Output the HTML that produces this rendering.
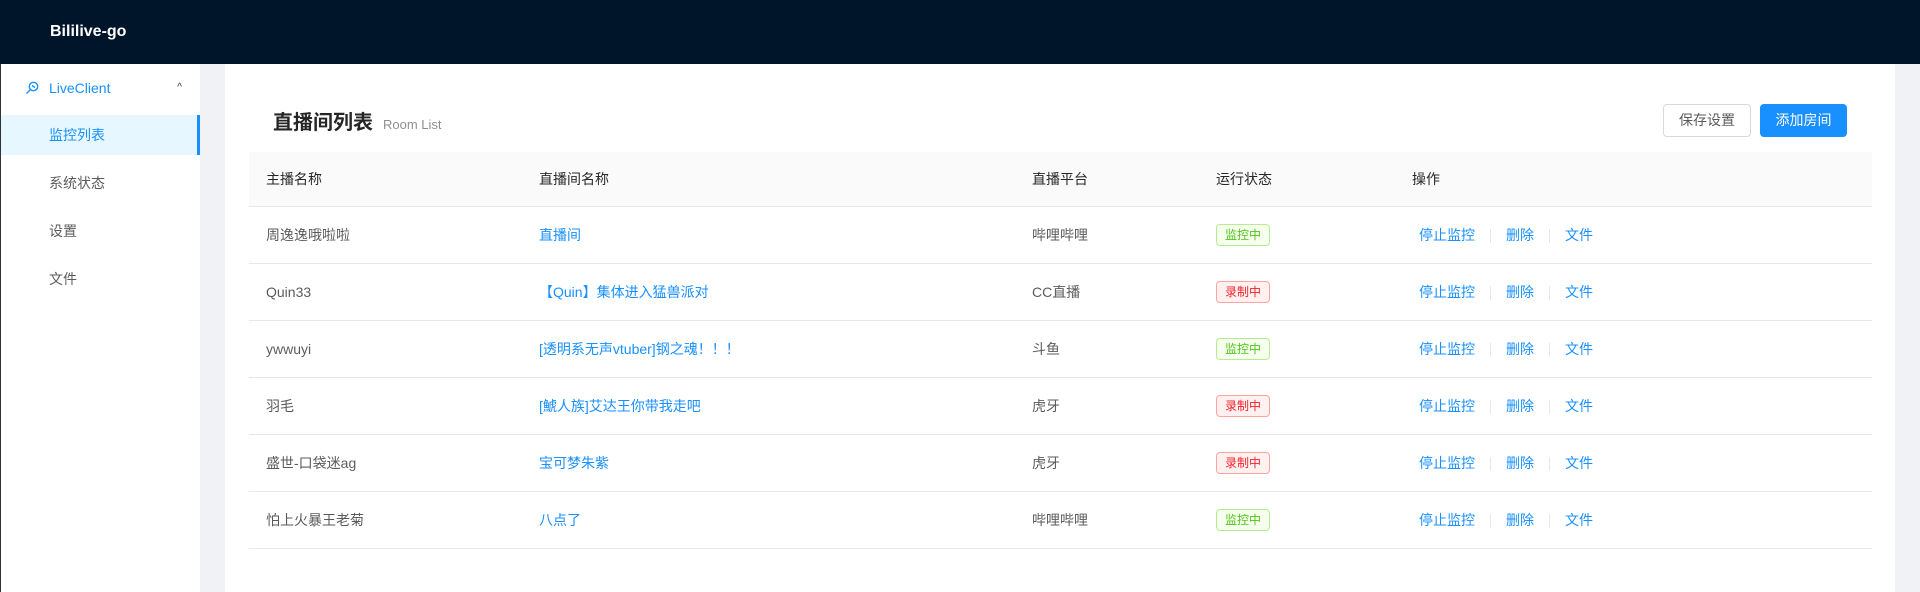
<!DOCTYPE html>
<html><head><meta charset="utf-8"><style>
*{box-sizing:border-box;margin:0;padding:0}
body{width:1920px;height:592px;overflow:hidden;background:#f0f2f5;font-family:"Liberation Sans","Noto Sans CJK SC",sans-serif;font-size:14px;color:rgba(0,0,0,.65);position:relative}
.hdr{position:absolute;left:0;top:0;width:1920px;height:64px;background:#001529;color:#fff;font-weight:bold;font-size:16px;line-height:64px;padding-left:50px}
.side{position:absolute;left:0;top:64px;width:200px;height:528px;background:#fff;border-left:1px solid #333}
.sub{height:40px;margin-top:4px;line-height:40px;padding-left:48px;color:#1890ff;position:relative}
.sub svg{position:absolute;left:24px;top:13px}
.sub .arr{position:absolute;right:18px;top:0;font-size:10px;color:#333}
.it{height:40px;line-height:40px;padding-left:48px;margin-top:8px;color:rgba(0,0,0,.65)}
.it.act{background:#e6f7ff;color:#1890ff;border-right:3px solid #1890ff;margin-top:7px}
.main{position:absolute;left:225px;top:64px;width:1670px;height:528px;background:#fff}
.title{position:absolute;left:48px;top:42px;font-size:20px;font-weight:bold;color:rgba(0,0,0,.85)}
.title span{font-size:13px;font-weight:normal;color:rgba(0,0,0,.45);margin-left:10px}
.btn{position:absolute;top:40px;height:33px;line-height:31px;border-radius:4px;font-size:14px;text-align:center}
.b1{left:1438px;width:88px;border:1px solid #d9d9d9;color:rgba(0,0,0,.65)}
.b2{left:1535px;width:87px;background:#1890ff;color:#fff;border:1px solid #1890ff}
table{position:absolute;left:24px;top:88px;width:1623px;border-collapse:collapse}
th{background:#fafafa;font-weight:normal;color:rgba(0,0,0,.85);height:54px;text-align:left;border-bottom:1px solid #e8e8e8}
td{height:57px;border-bottom:1px solid #e8e8e8}
th,td{padding-left:17px}
a{color:#1890ff;text-decoration:none}
.tag{display:inline-block;font-size:12px;line-height:20px;padding:0 8px;border-radius:4px;border:1px solid #b7eb8f;background:#f6ffed;color:#52c41a}
.tag.r{border-color:#ffa39e;background:#fff1f0;color:#f5222d}
.sep{display:inline-block;width:1px;height:14px;background:#e8e8e8;margin:0 15px;vertical-align:middle}
.op{padding-left:24px}
</style></head><body>
<div class="hdr">Bililive-go</div>
<div class="side">
<div class="sub"><svg width="14" height="14" viewBox="0 0 14 14" fill="none" stroke="#1890ff" stroke-width="1.4"><circle cx="8.5" cy="5.5" r="4.2"/><path d="M5.5 8.5L1.5 12.5M7 4.5l3 2"/></svg>LiveClient<span class="arr">^</span></div>
<div class="it act">监控列表</div>
<div class="it">系统状态</div>
<div class="it">设置</div>
<div class="it">文件</div>
</div>
<div class="main">
<div class="title">直播间列表<span>Room List</span></div>
<div class="btn b1">保存设置</div><div class="btn b2">添加房间</div>
<table>
<colgroup><col style="width:273px"><col style="width:493px"><col style="width:184px"><col style="width:196px"><col></colgroup>
<tr><th>主播名称</th><th>直播间名称</th><th>直播平台</th><th>运行状态</th><th>操作</th></tr>
<tr><td>周逸逸哦啦啦</td><td><a>直播间</a></td><td>哔哩哔哩</td><td><span class="tag">监控中</span></td><td class="op"><a>停止监控</a><span class="sep"></span><a>删除</a><span class="sep"></span><a>文件</a></td></tr>
<tr><td>Quin33</td><td><a>【Quin】集体进入猛兽派对</a></td><td>CC直播</td><td><span class="tag r">录制中</span></td><td class="op"><a>停止监控</a><span class="sep"></span><a>删除</a><span class="sep"></span><a>文件</a></td></tr>
<tr><td>ywwuyi</td><td><a>[透明系无声vtuber]钢之魂！！！</a></td><td>斗鱼</td><td><span class="tag">监控中</span></td><td class="op"><a>停止监控</a><span class="sep"></span><a>删除</a><span class="sep"></span><a>文件</a></td></tr>
<tr><td>羽毛</td><td><a>[鯱人族]艾达王你带我走吧</a></td><td>虎牙</td><td><span class="tag r">录制中</span></td><td class="op"><a>停止监控</a><span class="sep"></span><a>删除</a><span class="sep"></span><a>文件</a></td></tr>
<tr><td>盛世-口袋迷ag</td><td><a>宝可梦朱紫</a></td><td>虎牙</td><td><span class="tag r">录制中</span></td><td class="op"><a>停止监控</a><span class="sep"></span><a>删除</a><span class="sep"></span><a>文件</a></td></tr>
<tr><td>怕上火暴王老菊</td><td><a>八点了</a></td><td>哔哩哔哩</td><td><span class="tag">监控中</span></td><td class="op"><a>停止监控</a><span class="sep"></span><a>删除</a><span class="sep"></span><a>文件</a></td></tr>
</table>
</div>
</body></html>
